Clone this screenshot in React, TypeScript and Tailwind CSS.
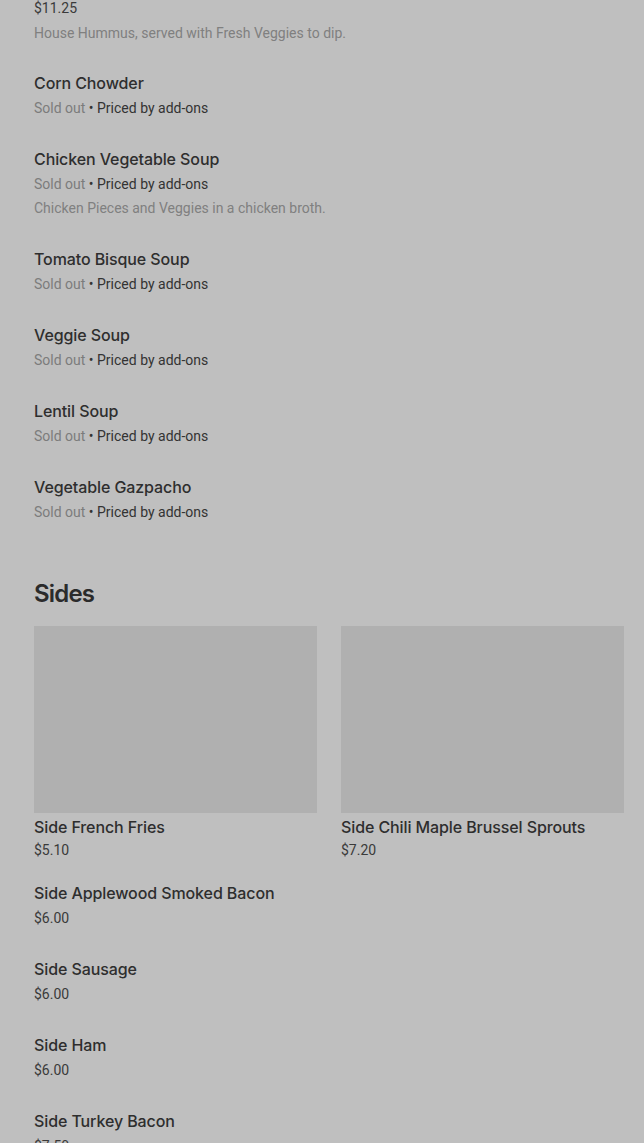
import React from 'react'

const soups = [
  { name: 'Corn Chowder' },
  { name: 'Chicken Vegetable Soup', desc: 'Chicken Pieces and Veggies in a chicken broth.' },
  { name: 'Tomato Bisque Soup' },
  { name: 'Veggie Soup' },
  { name: 'Lentil Soup' },
  { name: 'Vegetable Gazpacho' },
]

const sideList = [
  { name: 'Side Applewood Smoked Bacon', price: '$6.00' },
  { name: 'Side Sausage', price: '$6.00' },
  { name: 'Side Ham', price: '$6.00' },
  { name: 'Side Turkey Bacon', price: '$7.50' },
]

const body = "font-['Roboto',sans-serif] text-[14px] leading-6"

function SoldOut() {
  return (
    <div className={`${body} mt-[1px]`}>
      <span className="text-[#7c7c7c]">Sold out</span>
      <span className="text-[#333]"> • Priced by add-ons</span>
    </div>
  )
}

export default function App() {
  return (
    <div className="min-h-screen bg-[#bfbfbf] font-['Inter',sans-serif] pl-[34px] pr-[20px] overflow-hidden h-[1143px]">
      {/* Top item, scrolled partly off screen */}
      <div className="-mt-[28px] pb-[26px]">
        <div className="text-[16px] leading-6 font-medium text-[#2e2e2e]">Hummus Plate</div>
        <div className={`${body} text-[#3a3a3a]`}>$11.25</div>
        <div className={`${body} text-[#808080] mt-[1px]`}>House Hummus, served with Fresh Veggies to dip.</div>
      </div>

      {/* Soups */}
      {soups.map((s) => (
        <div key={s.name} className="pb-[27px]">
          <div className="text-[16px] leading-6 font-medium text-[#2e2e2e] tracking-[-0.1px]">{s.name}</div>
          <SoldOut />
          {s.desc && <div className={`${body} text-[#808080]`}>{s.desc}</div>}
        </div>
      ))}

      {/* Sides */}
      <h2 className="mt-[27px] text-[24px] leading-8 font-semibold text-[#2b2b2b] tracking-[-0.8px]">Sides</h2>
      <div className="mt-[16px] grid grid-cols-2 gap-6">
        <div>
          <div className="h-[187px] bg-[#b0b0b0]" />
          <div className="mt-[2px] text-[16px] leading-6 font-medium text-[#2e2e2e] tracking-[-0.1px]">Side French Fries</div>
          <div className={`${body} leading-5 -mt-[1px] text-[#3a3a3a]`}>$5.10</div>
        </div>
        <div>
          <div className="h-[187px] bg-[#b0b0b0]" />
          <div className="mt-[2px] text-[16px] leading-6 font-medium text-[#2e2e2e] tracking-[-0.1px]">Side Chili Maple Brussel Sprouts</div>
          <div className={`${body} leading-5 -mt-[1px] text-[#3a3a3a]`}>$7.20</div>
        </div>
      </div>
      <div className="mt-[19px]">
        {sideList.map((s) => (
          <div key={s.name} className="pb-[27px]">
            <div className="text-[16px] leading-6 font-medium text-[#2e2e2e] tracking-[-0.1px]">{s.name}</div>
            <div className={`${body} mt-[1px] text-[#3a3a3a]`}>{s.price}</div>
          </div>
        ))}
      </div>
    </div>
  )
}
